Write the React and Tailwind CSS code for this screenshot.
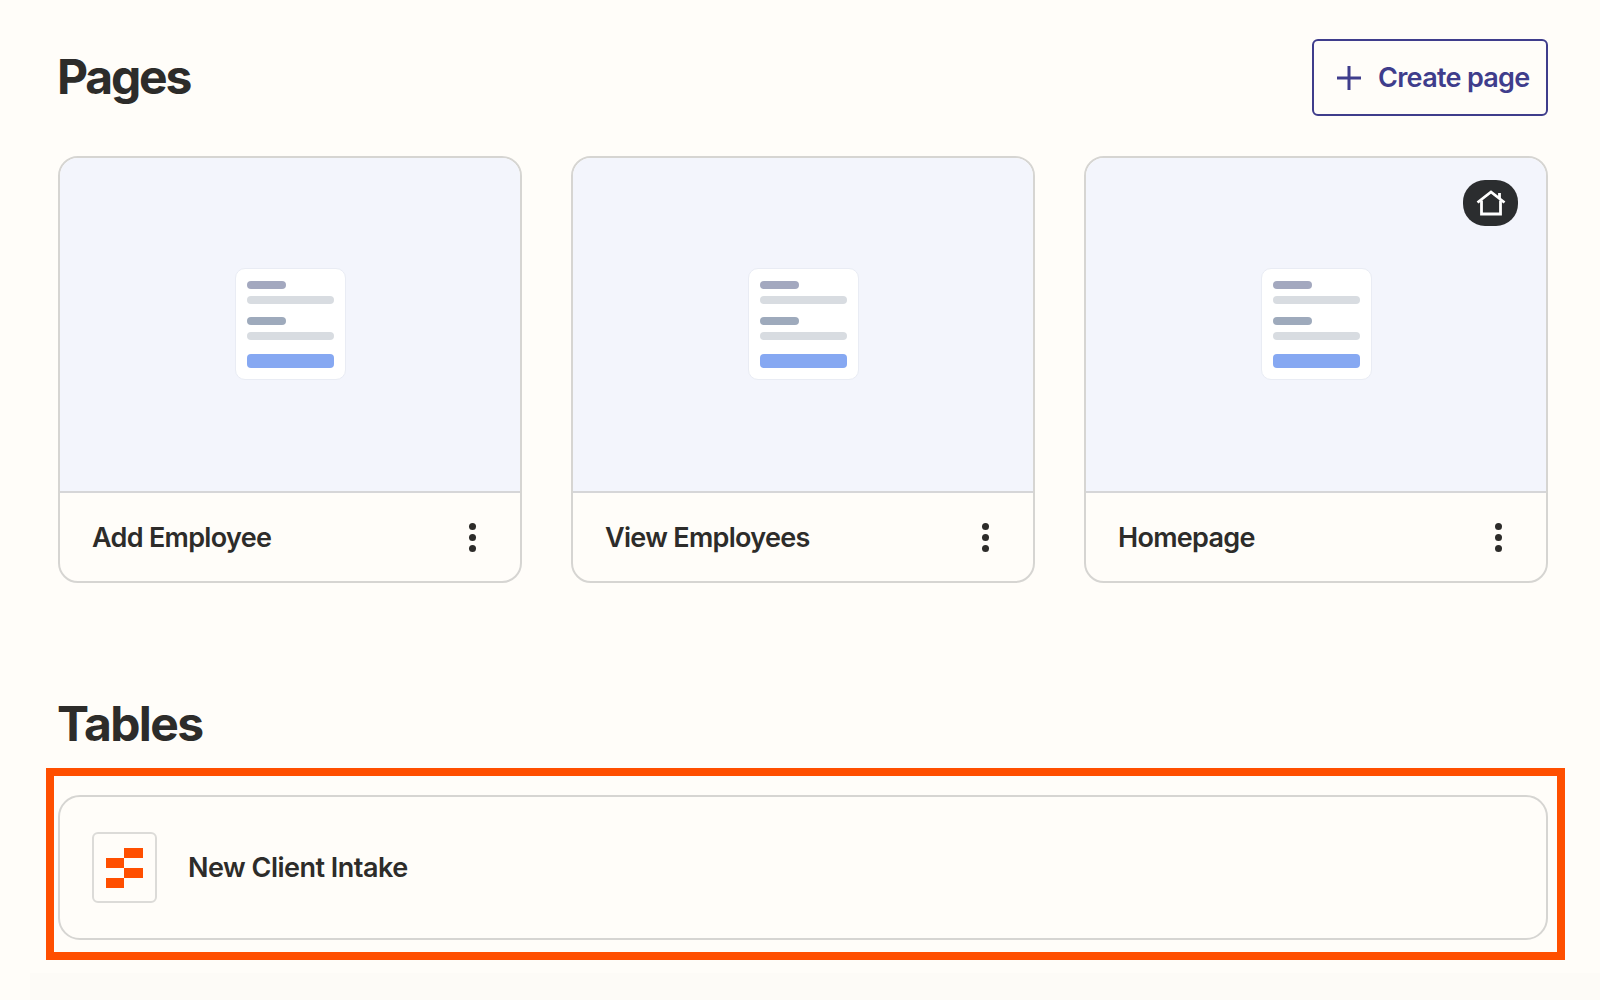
const pages = [
  { name: 'Add Employee' },
  { name: 'View Employees' },
  { name: 'Homepage', home: true },
]

function MiniDoc() {
  return (
    <div className="w-[111px] h-[112px] mb-[2px] bg-white rounded-[10px] border border-[#e9ecf4] px-[11px] pt-[12px] flex flex-col">
      <div className="w-[39px] h-[8px] rounded-full bg-[#a3a8bf]" />
      <div className="mt-[7px] h-[8px] rounded-full bg-[#d8dce1]" />
      <div className="mt-[13px] w-[39px] h-[8px] rounded-full bg-[#9eaabc]" />
      <div className="mt-[7px] h-[8px] rounded-full bg-[#d8dce1]" />
      <div className="mt-[14px] h-[14px] rounded-[4px] bg-[#86a8f2]" />
    </div>
  )
}

function PageCard({ name, home }) {
  return (
    <div className="relative flex-1 h-[427px] rounded-[20px] border-2 border-[#d6d5d2] overflow-hidden flex flex-col">
      <div className="h-[335px] bg-[#f3f5fc] border-b-2 border-[#d6d6d8] flex items-center justify-center shrink-0">
        <MiniDoc />
      </div>
      {home && (
        <div className="absolute top-[22px] right-[28px] w-[55px] h-[46px] rounded-[22px] bg-[#2b2d2f] flex items-center justify-center">
          <svg width="30" height="28" viewBox="0 0 30 28" fill="none" stroke="white" strokeWidth="2.8" strokeLinejoin="miter">
            <path d="M1.5 13.5 L15 3 L28.5 13.5" />
            <path d="M23.5 4 V9" />
            <path d="M5.5 11.5 V25 H24.5 V11.5" />
          </svg>
        </div>
      )}
      <div className="flex-1 flex items-center justify-between pl-[32px] pr-[44px]">
        <span className="relative top-[1px] text-[27px] font-semibold text-[#2d2c2a] tracking-[-0.7px]">{name}</span>
        <div className="flex flex-col gap-[4px]">
          <span className="w-[7px] h-[7px] rounded-full bg-[#2d2c2a]" />
          <span className="w-[7px] h-[7px] rounded-full bg-[#2d2c2a]" />
          <span className="w-[7px] h-[7px] rounded-full bg-[#2d2c2a]" />
        </div>
      </div>
    </div>
  )
}

export default function App() {
  return (
    <div className="h-screen overflow-hidden bg-[#fffdf9] font-['Inter',sans-serif] flex flex-col">
      <div className="flex items-center justify-between pl-[57px] pr-[52px] pt-[39px]">
        <h1 className="mb-[2px] text-[48px] leading-[56px] font-bold text-[#2d2c2a] tracking-[-2.2px]">Pages</h1>
        <button className="w-[236px] h-[77px] rounded-[6px] border-2 border-[#3f3d8c] flex items-center pl-[23px] gap-[17px] text-[#3f3d8c]">
          <svg width="24" height="24" viewBox="0 0 24 24" fill="none" stroke="currentColor" strokeWidth="3">
            <path d="M12 0 V24 M0 12 H24" />
          </svg>
          <span className="relative top-[1px] text-[27px] font-semibold tracking-[-0.7px]">Create page</span>
        </button>
      </div>

      <div className="flex gap-[49px] pl-[58px] pr-[52px] mt-[40px]">
        {pages.map((page) => (
          <PageCard key={page.name} name={page.name} home={page.home} />
        ))}
      </div>

      <h2 className="pl-[57px] mt-[113px] text-[48px] leading-[56px] font-bold text-[#2d2c2a] tracking-[-1.6px]">Tables</h2>

      <div className="ml-[46px] w-[1519px] h-[192px] mt-[16px] border-8 border-[#ff4f00] pl-[4px] pr-[9px] pt-[19px] pb-[12px] shrink-0">
        <div className="h-full rounded-[22px] border-2 border-[#d6d5d2] flex items-center pl-[32px] gap-[31px]">
          <div className="w-[65px] h-[71px] rounded-[6px] border-2 border-[#dcdbd8] flex items-center justify-center">
            <svg width="37" height="40" viewBox="0 0 37 40" fill="#ff4f00">
              <rect x="18" y="0" width="19" height="10" />
              <rect x="0" y="10" width="18" height="10" />
              <rect x="18" y="20" width="19" height="10" />
              <rect x="0" y="30" width="18" height="10" />
            </svg>
          </div>
          <span className="relative top-[1px] text-[27px] font-semibold text-[#2d2c2a] tracking-[-0.5px]">New Client Intake</span>
        </div>
      </div>

      <div className="flex-1 mt-[13px] ml-[30px] bg-[#fdfbf7]" />
    </div>
  )
}
